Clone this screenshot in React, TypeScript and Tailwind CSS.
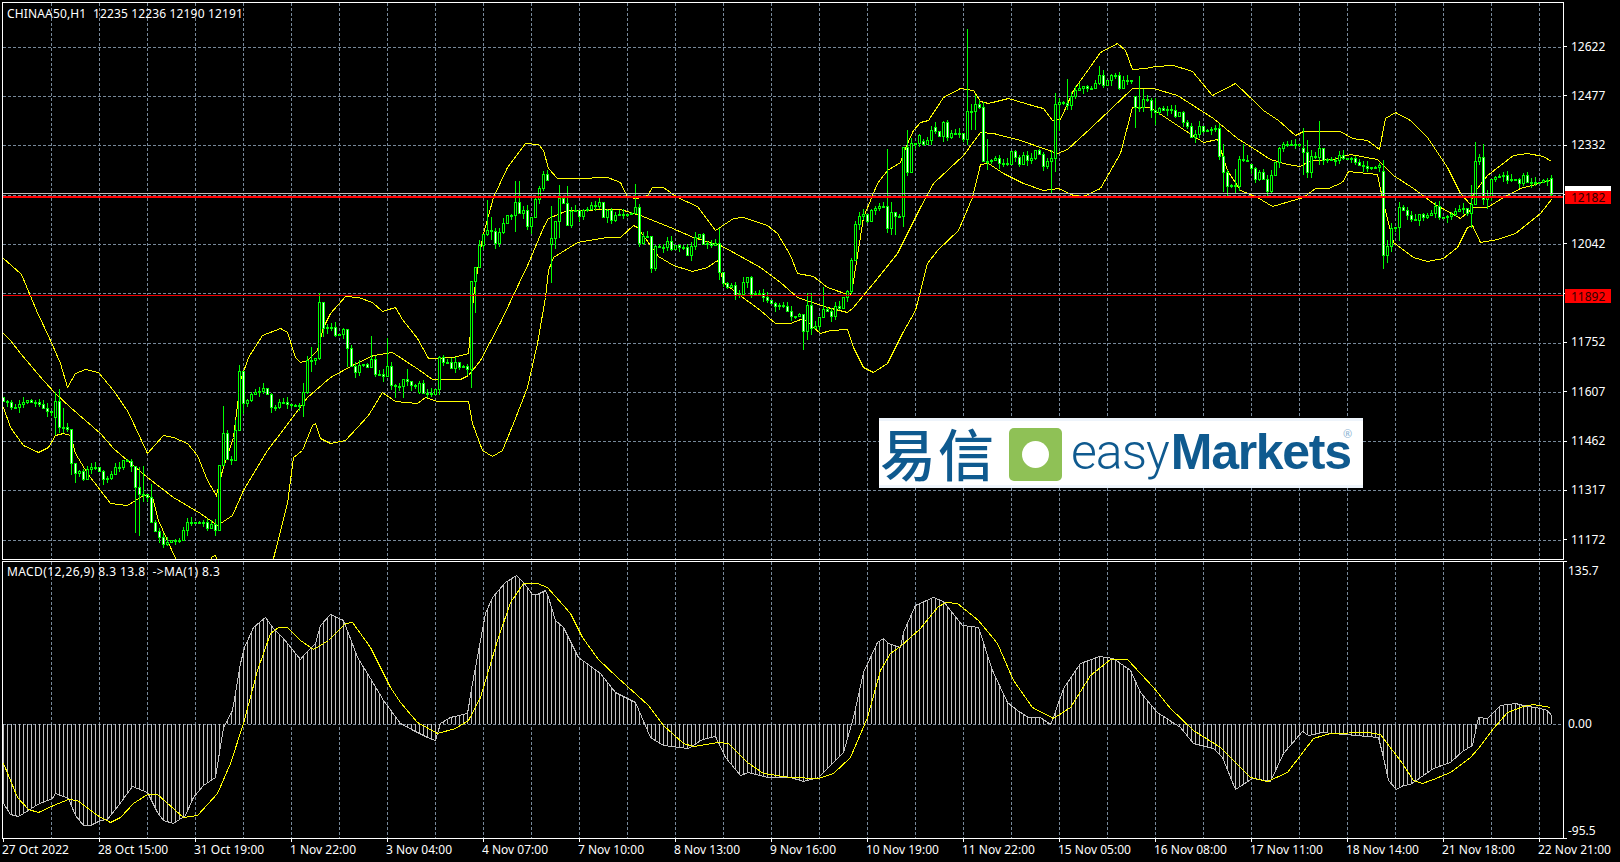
type Pt = [number, number];

const closes: number[] = [
  401, 402, 407, 407, 404, 402, 400, 402, 402, 404,
  408, 411, 412, 401, 427, 427, 429, 463, 473, 471,
  479, 469, 467, 467, 471, 479, 478, 474, 467, 467,
  460, 461, 466, 487, 494, 494, 497, 522, 531, 537,
  544, 542, 540, 540, 540, 530, 522, 522, 522, 522,
  522, 528, 524, 530, 465, 433, 459, 460, 430, 371,
  403, 400, 394, 392, 391, 388, 394, 407, 407, 402,
  402, 404, 405, 405, 405, 392, 360, 360, 358, 302,
  328, 327, 327, 335, 334, 329, 348, 366, 372, 365,
  364, 367, 359, 374, 374, 376, 366, 385, 386, 386,
  379, 381, 385, 385, 383, 393, 393, 394, 389, 357,
  362, 362, 368, 362, 367, 366, 369, 281, 267, 245,
  234, 230, 231, 243, 232, 223, 215, 215, 202, 213,
  210, 226, 217, 199, 188, 174, 180, 238, 221, 198,
  203, 225, 211, 210, 216, 210, 209, 205, 206, 202,
  217, 210, 220, 215, 214, 214, 214, 213, 207, 243,
  236, 236, 268, 246, 247, 247, 241, 249, 245, 247,
  247, 255, 246, 237, 234, 244, 243, 245, 243, 272,
  283, 287, 285, 295, 294, 282, 277, 294, 293, 293,
  297, 300, 303, 306, 305, 306, 311, 316, 316, 314,
  331, 305, 328, 326, 317, 309, 311, 316, 306, 308,
  297, 291, 260, 224, 216, 214, 221, 210, 208, 206,
  206, 228, 212, 216, 216, 147, 172, 143, 143, 135,
  144, 140, 130, 131, 136, 122, 137, 133, 133, 133,
  139, 111, 111, 104, 107, 161, 161, 160, 158, 163,
  163, 164, 151, 157, 164, 155, 160, 158, 150, 154,
  166, 161, 158, 104, 102, 103, 105, 96, 90, 88,
  86, 88, 88, 83, 75, 85, 80, 75, 75, 88,
  80, 80, 81, 107, 107, 99, 100, 110, 112, 108,
  110, 109, 110, 116, 112, 122, 126, 137, 134, 126,
  131, 130, 129, 128, 156, 172, 186, 185, 186, 159,
  160, 160, 168, 179, 172, 179, 191, 175, 162, 148,
  144, 145, 144, 144, 144, 152, 172, 156, 157, 148,
  160, 159, 160, 160, 155, 158, 158, 158, 162, 165,
  166, 168, 167, 167, 165, 255, 246, 228, 227, 207,
  210, 215, 219, 220, 214, 217, 215, 213, 206, 217,
  217, 216, 214, 211, 209, 208, 213, 204, 161, 157,
  199, 196, 179, 177, 176, 175, 180, 179, 179, 183,
  175, 182, 182, 182, 182, 180, 181, 194,
];

// bodies that do not start at the previous close
const opens: Record<number, number> = {
  55: 417, 419: 392, 551: 244, 923: 141, 935: 127, 1135: 96, 1251: 164, 1303: 148, 1383: 171, 1551: 178,
};

// long wicks, x -> [high, low]
const wicks: Record<number, Pt> = {
  55: [392, 435], 59: [389, 433], 63: [408, 433], 71: [431, 475], 75: [463, 483], 135: [467, 533], 139: [467, 536],
  143: [466, 502], 151: [484, 522], 219: [465, 525], 223: [406, 465], 227: [430, 459], 235: [420, 460], 239: [365, 430],
  243: [371, 414], 303: [383, 417], 311: [347, 372], 319: [293, 360], 323: [302, 337], 347: [329, 367], 371: [336, 367],
  387: [338, 377], 391: [362, 390], 395: [384, 398], 403: [379, 398], 407: [369, 386], 471: [336, 388], 475: [267, 313],
  487: [200, 236], 491: [217, 240], 515: [181, 232], 519: [181, 214], 531: [217, 234], 551: [206, 283], 555: [221, 249],
  559: [185, 238], 567: [186, 226], 635: [184, 213], 719: [228, 280], 803: [314, 350], 807: [293, 340], 811: [293, 335],
  823: [287, 318], 887: [149, 233], 891: [202, 235], 895: [212, 235], 903: [147, 227], 907: [130, 176], 967: [29, 145],
  971: [104, 130], 975: [95, 130], 987: [139, 170], 1051: [150, 193], 1055: [93, 172], 1059: [98, 131], 1067: [79, 110],
  1071: [92, 110], 1099: [66, 85], 1135: [96, 128], 1139: [76, 112], 1143: [89, 112], 1151: [98, 118], 1155: [98, 125],
  1219: [124, 160], 1223: [144, 192], 1227: [170, 198], 1235: [169, 193], 1243: [144, 162], 1303: [128, 175], 1307: [140, 178],
  1319: [121, 165], 1311: [150, 178], 1383: [160, 269], 1387: [240, 263], 1399: [202, 241], 1471: [185, 228], 1475: [142, 165],
  1483: [144, 205], 1487: [190, 209],
};

const upper: Pt[] = [
  [3, 258], [21, 274], [36, 310], [50, 340], [60, 363], [67, 387], [75, 373], [85, 369], [98, 372], [113, 390], [128, 412], [147, 453],
  [163, 435], [173, 437], [187, 443], [197, 455], [207, 480], [216, 495], [222, 470], [233, 437], [240, 380], [248, 357], [262, 335],
  [280, 328], [287, 332], [295, 357], [300, 362], [307, 360], [317, 350], [323, 327], [330, 313], [345, 296], [358, 297], [372, 302],
  [382, 311], [395, 307], [402, 319], [417, 338], [428, 358], [437, 358], [453, 357], [468, 353], [473, 297], [482, 237], [493, 197],
  [507, 167], [525, 143], [538, 144], [543, 150], [548, 168], [557, 178], [577, 178], [607, 177], [620, 182], [627, 197], [637, 198],
  [647, 195], [652, 187], [663, 187], [677, 197], [697, 206], [715, 230], [733, 218], [743, 217], [767, 225], [777, 233], [790, 255],
  [797, 273], [813, 276], [827, 287], [850, 295], [852, 287], [863, 217], [877, 183], [887, 170], [900, 162], [907, 143], [913, 130],
  [920, 122], [928, 120], [943, 97], [960, 88], [973, 90], [980, 101], [988, 103], [1008, 98], [1035, 106], [1043, 108], [1052, 120],
  [1060, 119], [1073, 90], [1100, 52], [1117, 43], [1125, 50], [1132, 69], [1145, 68], [1155, 66], [1173, 65], [1192, 71], [1212, 95],
  [1235, 83], [1255, 102], [1263, 110], [1278, 120], [1295, 135], [1303, 131], [1340, 131], [1352, 138], [1367, 140], [1379, 149],
  [1385, 118], [1395, 112], [1410, 120], [1427, 137], [1447, 167], [1460, 193], [1470, 204], [1473, 193], [1487, 175], [1513, 155],
  [1527, 153], [1543, 156], [1551, 161],
];

const middle: Pt[] = [
  [3, 333], [10, 340], [20, 353], [43, 380], [55, 393], [70, 407], [100, 433], [113, 448], [147, 477], [173, 497], [200, 513], [217, 525],
  [232, 515], [243, 490], [267, 450], [280, 433], [307, 397], [330, 377], [352, 365], [373, 355], [392, 352], [418, 369], [432, 379],
  [460, 379], [468, 375], [480, 360], [500, 322], [528, 263], [543, 227], [548, 218], [567, 210], [620, 209], [640, 215], [670, 227],
  [693, 237], [720, 245], [733, 252], [760, 267], [780, 282], [797, 297], [827, 307], [847, 312], [853, 307], [873, 283], [897, 253],
  [920, 207], [933, 183], [963, 155], [980, 132], [993, 133], [1020, 140], [1043, 148], [1057, 153], [1067, 149], [1090, 128], [1132, 88],
  [1153, 88], [1177, 95], [1213, 118], [1237, 138], [1253, 148], [1270, 159], [1287, 164], [1300, 166], [1310, 160], [1333, 159],
  [1350, 154], [1377, 159], [1393, 175], [1413, 188], [1433, 203], [1460, 218], [1473, 207], [1487, 207], [1503, 197], [1520, 188], [1550, 180],
];

const lower: Pt[] = [
  [3, 407], [10, 427], [23, 445], [38, 452], [48, 447], [55, 435], [63, 433], [70, 435], [75, 453], [87, 473], [110, 503], [127, 505],
  [143, 495], [152, 497], [158, 520], [170, 547], [177, 562], [208, 562], [212, 556], [215, 555], [218, 562], [272, 562], [287, 503],
  [293, 457], [302, 450], [312, 425], [315, 423], [320, 438], [330, 443], [345, 440], [368, 415], [382, 392], [395, 401], [417, 403],
  [425, 397], [437, 401], [468, 401], [472, 423], [482, 450], [492, 456], [502, 450], [513, 423], [527, 387], [537, 343], [545, 297],
  [548, 270], [553, 257], [577, 242], [607, 237], [620, 237], [633, 225], [637, 227], [658, 256], [673, 265], [692, 271], [707, 267],
  [717, 260], [723, 282], [737, 293], [760, 310], [775, 323], [790, 323], [803, 318], [820, 333], [830, 330], [847, 329], [853, 347],
  [863, 367], [873, 372], [887, 363], [902, 333], [915, 310], [927, 263], [937, 250], [958, 230], [972, 197], [980, 164], [988, 163],
  [1003, 173], [1023, 183], [1043, 190], [1058, 188], [1073, 195], [1083, 196], [1100, 188], [1120, 153], [1132, 107], [1150, 107],
  [1180, 127], [1203, 142], [1217, 139], [1227, 170], [1240, 190], [1257, 197], [1272, 206], [1303, 197], [1315, 188], [1328, 188],
  [1342, 182], [1348, 171], [1377, 174], [1383, 203], [1393, 242], [1413, 257], [1427, 261], [1443, 258], [1457, 247], [1467, 227],
  [1472, 225], [1480, 242], [1497, 239], [1515, 233], [1540, 213], [1551, 199],
];

const histTops: Pt[] = [
  [3, 803], [10, 814], [18, 816], [28, 810], [37, 804], [52, 798], [55, 793], [68, 798], [75, 815], [83, 825], [90, 825], [100, 820],
  [107, 819], [118, 805], [132, 786], [147, 792], [157, 812], [163, 820], [173, 823], [185, 815], [193, 797], [203, 785], [215, 777],
  [223, 727], [232, 710], [240, 663], [244, 647], [253, 627], [265, 617], [273, 628], [283, 638], [300, 659], [305, 653], [315, 643],
  [320, 625], [330, 614], [343, 620], [348, 633], [357, 657], [370, 678], [383, 700], [400, 723], [413, 730], [427, 737], [435, 740],
  [440, 723], [450, 717], [467, 713], [472, 683], [485, 613], [492, 597], [505, 582], [516, 575], [523, 582], [532, 594], [537, 594],
  [545, 590], [548, 597], [555, 620], [563, 627], [578, 657], [600, 673], [615, 692], [635, 702], [650, 737], [663, 745], [688, 748],
  [702, 739], [715, 736], [725, 757], [740, 775], [748, 772], [767, 777], [790, 777], [803, 781], [818, 777], [830, 765], [843, 752],
  [853, 717], [863, 672], [877, 642], [883, 638], [888, 643], [900, 647], [903, 632], [915, 605], [933, 597], [943, 601], [962, 625],
  [978, 627], [992, 670], [1007, 702], [1017, 710], [1028, 717], [1040, 717], [1050, 724], [1053, 717], [1063, 688], [1080, 663],
  [1099, 656], [1113, 658], [1130, 670], [1140, 692], [1157, 712], [1180, 727], [1193, 743], [1213, 748], [1222, 757], [1235, 789],
  [1252, 778], [1270, 781], [1283, 753], [1302, 731], [1308, 735], [1322, 732], [1378, 737], [1383, 757], [1388, 780], [1396, 789],
  [1403, 785], [1410, 784], [1433, 768], [1450, 762], [1462, 751], [1472, 745], [1478, 717], [1487, 718], [1500, 705], [1515, 703],
  [1523, 705], [1540, 708], [1547, 710], [1551, 715],
];

const signal: Pt[] = [
  [3, 763], [17, 797], [28, 809], [38, 812], [53, 805], [68, 799], [77, 800], [97, 815], [110, 822], [120, 817], [133, 803], [147, 794],
  [157, 794], [183, 817], [197, 815], [217, 793], [230, 763], [243, 723], [257, 670], [270, 633], [278, 627], [287, 627], [300, 640],
  [313, 649], [328, 640], [345, 623], [352, 622], [370, 647], [390, 687], [400, 702], [417, 722], [437, 733], [455, 728], [468, 720],
  [480, 697], [497, 640], [510, 602], [523, 583], [537, 583], [547, 587], [570, 613], [582, 637], [598, 659], [617, 677], [637, 695],
  [648, 705], [663, 725], [683, 743], [693, 746], [718, 742], [728, 743], [747, 762], [763, 773], [790, 777], [818, 778], [833, 773],
  [850, 757], [867, 717], [880, 670], [890, 653], [900, 646], [920, 628], [937, 607], [945, 602], [957, 603], [978, 620], [997, 643],
  [1013, 680], [1032, 707], [1053, 718], [1070, 707], [1090, 675], [1110, 659], [1127, 659], [1153, 687], [1170, 708], [1193, 730],
  [1220, 747], [1250, 777], [1267, 781], [1287, 772], [1313, 738], [1330, 733], [1367, 732], [1380, 734], [1402, 763], [1413, 780],
  [1422, 783], [1433, 779], [1450, 772], [1470, 757], [1478, 748], [1493, 728], [1507, 712], [1523, 706], [1533, 704], [1550, 707],
];

const gridX: number[] = Array.from({ length: 32 }, (_, i) => 51 + i * 48);
const gridY = [47, 96, 145, 195, 244, 293, 343, 392, 441, 490, 540];
// the 12187 and 11897 rows sit under the red price tags, only their ticks show
const prices = ["12622", "12477", "12332", "", "12042", "", "11752", "11607", "11462", "11317", "11172"];
const times = [
  "27 Oct 2022", "28 Oct 15:00", "31 Oct 19:00", "1 Nov 22:00", "3 Nov 04:00", "4 Nov 07:00", "7 Nov 10:00", "8 Nov 13:00", "9 Nov 16:00",
  "10 Nov 19:00", "11 Nov 22:00", "15 Nov 05:00", "16 Nov 08:00", "17 Nov 11:00", "18 Nov 14:00", "21 Nov 18:00", "22 Nov 21:00",
];

const pts = (line: Pt[]) => line.map(([x, y]) => `${x + 0.5},${y + 0.5}`).join(" ");

const yAt = (line: Pt[], x: number) => {
  for (let i = 1; i < line.length; i++) {
    if (x <= line[i][0]) {
      const [x0, y0] = line[i - 1];
      const [x1, y1] = line[i];
      return Math.round(y0 + ((y1 - y0) * (x - x0)) / (x1 - x0));
    }
  }
  return line[line.length - 1][1];
};

const Grid = ({ rows, top, bottom }: { rows: number[]; top: number; bottom: number }) => (
  <g stroke="#778899" strokeDasharray="3 2" shapeRendering="crispEdges">
    {gridX.map((x) => <line key={x} x1={x + 0.5} x2={x + 0.5} y1={top} y2={bottom} />)}
    {rows.map((y) => <line key={y} x1={3} x2={1563} y1={y + 0.5} y2={y + 0.5} />)}
  </g>
);

const Candles = () => (
  <g shapeRendering="crispEdges">
    {closes.map((close, k) => {
      const x = 3 + k * 4;
      const open = opens[x] ?? (k === 0 ? close - 4 : closes[k - 1]);
      const top = Math.min(open, close);
      const bot = Math.max(open, close);
      const [hi, lo] = wicks[x] ?? [top - ((k * 7) % 6), bot + ((k * 5) % 7)];
      return (
        <g key={x}>
          <line x1={x + 0.5} x2={x + 0.5} y1={hi} y2={lo} stroke="#00ff00" />
          <rect x={x - 0.5} y={top + 0.5} width={2} height={Math.max(bot - top, 1)} stroke="#00ff00" fill={close > open ? "#ffffff" : "#000000"} />
        </g>
      );
    })}
  </g>
);

const Histogram = () => (
  <g shapeRendering="crispEdges">
    {closes.map((_, k) => {
      const x = 3 + k * 4;
      return <line key={x} x1={x + 0.5} x2={x + 0.5} y1={yAt(histTops, x)} y2={724} stroke="#c0c0c0" />;
    })}
    <polyline points={pts(histTops)} fill="none" stroke="#c0c0c0" />
  </g>
);

export default function App() {
  return (
    <div className="relative w-[1620px] h-[862px] overflow-hidden bg-black text-white pl-[2px] pt-[2px] font-['Noto_Sans',sans-serif] text-[12px] leading-[16px]">
      {/* price pane */}
      <div className="flex h-[558px]">
        <div className="relative w-[1562px] h-full shrink-0 border border-white">
          <svg className="block w-[1560px] h-[556px]" viewBox="3 3 1560 556">
            <Grid rows={gridY} top={3} bottom={559} />
            <g fill="none" stroke="#ffff00" shapeRendering="crispEdges">
              <polyline points={pts(upper)} />
              <polyline points={pts(middle)} />
              <polyline points={pts(lower)} />
            </g>
            <Candles />
            <g shapeRendering="crispEdges">
              <line x1={3} x2={1563} y1={193.5} y2={193.5} stroke="#c0c0c0" />
              <rect x={3} y={196} width={1560} height={2} fill="#ff0000" />
              <rect x={3} y={295} width={1560} height={1} fill="#ee0000" />
            </g>
          </svg>
          <span className="absolute left-[4px] top-[3px] whitespace-pre tracking-[0.15px]">CHINAA50,H1  12235 12236 12190 12191</span>
          <div className="absolute left-[876px] top-[415px] w-[484px] h-[70px] flex items-center bg-white border-y-[3px] border-[#eef4fb] text-[#0f5a8f]">
            <span className="ml-px mb-[2px] font-['Noto_Sans_CJK_SC',sans-serif] font-medium text-[56px] leading-none tracking-[2px]">易信</span>
            <div className="ml-[13px] mt-[3px] w-[53px] h-[53px] rounded-[5px] bg-[#8fc156] flex items-center justify-center shrink-0">
              <div className="w-[27px] h-[27px] rounded-full bg-white" />
            </div>
            <span className="ml-[9px] mb-[3px] font-['Roboto',sans-serif] font-light text-[50px] leading-[30px] tracking-[-1px]">easy</span>
            <span className="ml-[2px] mb-[3px] font-['Liberation_Sans',sans-serif] font-bold text-[50px] leading-[30px] tracking-[-1.3px]">Markets</span>
            <span className="absolute left-[464px] top-[7px] text-[11px] leading-[11px] text-[#8db4d3]">®</span>
          </div>
        </div>
        <div className="relative w-[56px] shrink-0 pt-[20px]">
          {prices.map((p, i) => (
            <div key={i} className="h-[49.3px] flex items-center">
              <span className="w-[3px] h-px bg-white" />
              <span className="ml-[4px]">{p}</span>
            </div>
          ))}
          <div className="absolute left-[1px] top-[184px] w-[46px] h-[14px] bg-white" />
          <div className="absolute left-[1px] top-[189px] w-[46px] h-[13px] bg-[#ff0000] text-[#300000] pl-[6px] leading-[14px]">12182</div>
          <div className="absolute left-[1px] top-[287px] w-[46px] h-[14px] bg-[#ff0000] text-[#300000] pl-[6px]">11892</div>
        </div>
      </div>

      {/* macd pane */}
      <div className="flex h-[278px] mt-px">
        <div className="relative w-[1562px] h-full shrink-0 border border-white">
          <svg className="block w-[1560px] h-[276px]" viewBox="3 562 1560 276">
            <Grid rows={[724]} top={562} bottom={838} />
            <Histogram />
            <polyline points={pts(signal)} fill="none" stroke="#ffff00" shapeRendering="crispEdges" />
          </svg>
          <span className="absolute left-[4px] top-[2px] whitespace-pre tracking-[0.4px]">MACD(12,26,9) 8.3 13.8  -&gt;MA(1) 8.3</span>
        </div>
        <div className="relative w-[56px] shrink-0 pl-[4px] pt-[2px]">
          <div className="absolute left-0 top-0 w-[3px] h-px bg-white" />
          <div>135.7</div>
          <div className="mt-[137px]">0.00</div>
          <div className="mt-[91px]">-95.5</div>
          <div className="absolute left-0 bottom-0 w-[3px] h-px bg-white" />
        </div>
      </div>

      {/* time axis */}
      <div className="flex ml-px">
        {times.map((t) => (
          <div key={t} className="w-[96px] shrink-0 flex flex-col">
            <span className="w-px h-[3px] bg-white" />
            <span className="-ml-px whitespace-nowrap">{t}</span>
          </div>
        ))}
      </div>
    </div>
  );
}
